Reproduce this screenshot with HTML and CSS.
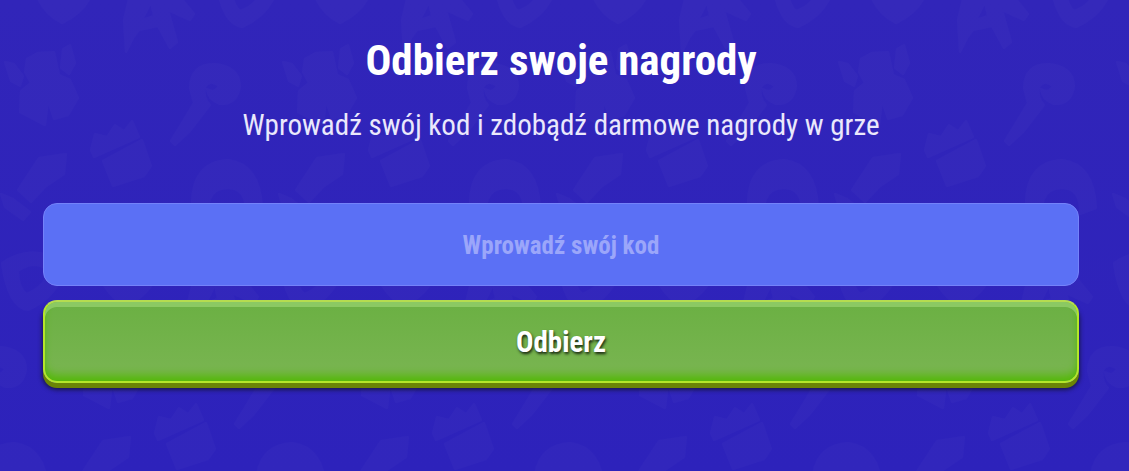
FILE: index.html
```
<!DOCTYPE html>
<html lang="pl">
<head>
  <meta charset="UTF-8">
  <meta name="viewport" content="width=device-width, initial-scale=1.0">
  <title>Odbierz swoje nagrody</title>
  <link rel="stylesheet" href="styles.css">
</head>
<body>
  <svg class="backdrop" aria-hidden="true">
    <defs>
      <g id="doodles">
        <!-- shield -->
        <path d="M32-24 Q62-38 94-22 Q94 8 62 23 Q36 10 32-24Z M50-14 Q62-20 76-12 Q74-4 62 0 Q52-4 50-14Z"/>
        <!-- rune -->
        <path d="M126 52 L124 20 L133-18 L160-16 L176-8 L194 14 L190 20 L168 10 L177 42 L170 48 L158 26 L139 30 L133 38Z M142 20 L154 16 L151 2Z"/>
        <!-- coin -->
        <path d="M216-20 Q248-42 280-18 Q272 14 242 27 Q222 24 216-20Z M232-12 Q248-24 264-12 Q256 6 240 11 Q232 4 232-12Z"/>
        <!-- bear -->
        <path d="M5 62 L14 64 L23 76 L20 86 L11 81Z M27 59 L38 53 L54 52 L59 75 L70 80 L78 98 L68 115 L54 119 L48 101 L45 125 L20 112 L21 91 L31 83 L25 72Z M63 49 L70 45 L75 63 L69 74 L61 68Z"/>
        <!-- candy cane -->
        <path d="M171 141 L194 103 L190 88 Q191 64 214 64 Q239 66 240 86 Q237 105 220 104 Q208 100 207 89 Q215 94 219 86 Q210 79 205 87 Q203 98 210 105 L190 131 L175 145Z"/>
        <!-- gift -->
        <path d="M95 134 L107 137 L115 125 L124 131 L132 121 L139 137 L94 157 L91 150Z M103 161 L142 140 L151 166 L144 176 L113 186Z"/>
        <!-- ticket -->
        <path d="M18 190 L39 158 L66 154 L64 174 L45 187 L31 202Z M1 194 L13 199 L30 212 L23 220 L5 207Z"/>
        <!-- horseshoe -->
        <path d="M192 208 Q191 162 228 160 Q260 164 262 208 L246 214 Q247 188 228 188 Q207 188 208 214Z"/>
      </g>
      <pattern id="backdropPattern" width="278" height="566" patternUnits="userSpaceOnUse">
        <g class="doodle">
          <use href="#doodles"/>
          <use href="#doodles" x="-278"/>
          <use href="#doodles" x="64" y="283"/>
          <use href="#doodles" x="-214" y="283"/>
          <use href="#doodles" y="566"/>
        </g>
      </pattern>
    </defs>
    <rect width="100%" height="100%" fill="url(#backdropPattern)"/>
  </svg>

  <main class="redeem">
    <h1 class="redeem-title">Odbierz swoje nagrody</h1>
    <p class="redeem-text">Wprowadź swój kod i zdobądź darmowe nagrody w grze</p>
    <form class="redeem-form">
      <input class="code-input" type="text" name="code" placeholder="Wprowadź swój kod" aria-label="Wprowadź swój kod">
      <button class="claim-button" type="submit">Odbierz</button>
    </form>
  </main>
</body>
</html>
```
FILE: styles.css
```
* {
  box-sizing: border-box;
}

body {
  margin: 0;
  min-height: 100vh;
  background: linear-gradient(#3125b9, #2d22bb);
  color: #fff;
  font-family: "Roboto Condensed", "Liberation Sans Narrow", sans-serif;
}

.backdrop {
  position: absolute;
  inset: 0;
  width: 100%;
  height: 100%;
  z-index: -1;
}

.doodle {
  fill: #fff;
  fill-rule: evenodd;
  stroke: #fff;
  stroke-width: 2px;
  stroke-linejoin: round;
  opacity: 0.018;
}

.redeem {
  padding: 34px 50px 83px 43px;
  text-align: center;
}

.redeem-title {
  margin: 0;
  font-size: 43px;
  line-height: 52px;
  font-weight: 700;
}

.redeem-text {
  margin: 20px 0 0;
  color: #eae8fc;
  font-size: 29px;
  line-height: 38px;
}

.redeem-form {
  display: flex;
  flex-direction: column;
  gap: 14px;
  margin-top: 59px;
}

.code-input,
.claim-button {
  width: 100%;
  border-radius: 14px;
  font-family: inherit;
  font-weight: 700;
  text-align: center;
}

.code-input {
  height: 83px;
  padding: 2px 20px 0;
  border: 1px solid #7482fa;
  background: #5b70f5;
  color: #fff;
  font-size: 25px;
}

.code-input::placeholder {
  color: #9ba6fa;
  opacity: 1;
}

.claim-button {
  height: 83px;
  padding: 0;
  border: 2px solid #b4e62a;
  border-top-color: #b5dc50;
  background: linear-gradient(#6bb043, #7ab552);
  box-shadow:
    inset 0 5px 0 #8bc963,
    inset 0 -8px 8px -2px #56b80c,
    inset 0 0 4px #64b52a,
    0 5px 0 #6b8406,
    0 6px 4px 1px rgba(20, 20, 50, 0.8);
  color: #fff;
  font-size: 29px;
  text-shadow: 1px 2px 3px rgba(0, 0, 0, 0.8);
  cursor: pointer;
}
```
